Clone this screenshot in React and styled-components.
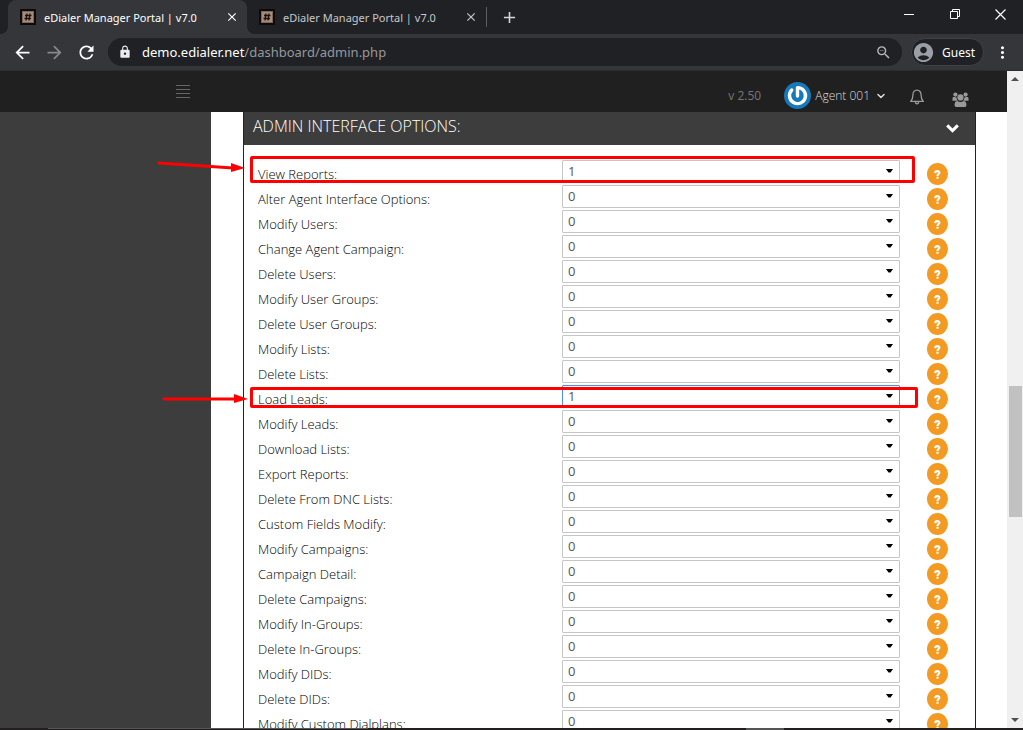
import React, { useState } from 'react'
import styled, { createGlobalStyle } from 'styled-components';
import {
  MdArrowBack,
  MdArrowForward,
  MdRefresh,
  MdLock,
  MdZoomOut,
  MdAccountCircle,
  MdMoreVert,
  MdClose,
  MdAdd,
} from 'react-icons/md';
import { FiChevronDown } from 'react-icons/fi';

const GlobalStyle = createGlobalStyle`
  * {
    box-sizing: border-box;
  }

  body {
    margin: 0;
    font-family: 'Open Sans', 'Noto Sans', sans-serif;
    font-size: 13px;
    color: #333;
  }

  button, input, select {
    font: inherit;
    color: inherit;
  }
`;

const Window = styled.div`
  display: flex;
  flex-direction: column;
  height: 100vh;
  overflow: hidden;
  background: #202124;
`;

const IconButton = styled.button`
  display: flex;
  align-items: center;
  justify-content: center;
  flex: none;
  width: ${(props) => props.$width || 32}px;
  height: ${(props) => props.$height || 32}px;
  padding: 0;
  border: 0;
  background: none;
  color: ${(props) => props.$color || '#fff'};
`;

/* tab strip */
const TabStrip = styled.div`
  display: flex;
  flex: none;
  height: 34px;
  padding-left: 8px;
`;

const Tab = styled.div`
  position: relative;
  display: flex;
  align-items: center;
  width: 239px;
  padding: 0 7px 0 12px;
  border-radius: 8px 8px 0 0;
  background: ${(props) => (props.$active ? '#35363a' : 'transparent')};
  color: ${(props) => (props.$active ? '#fff' : '#c5c8cc')};

  &::before, &::after {
    content: '';
    display: ${(props) => (props.$active ? 'block' : 'none')};
    position: absolute;
    bottom: 0;
    width: 8px;
    height: 8px;
  }
  &::before {
    left: -8px;
    background: radial-gradient(circle at 0 0, transparent 8px, #35363a 8px);
  }
  &::after {
    right: -8px;
    background: radial-gradient(circle at 100% 0, transparent 8px, #35363a 8px);
  }
`;

const TabTitle = styled.span`
  flex: 1;
  margin-left: 8px;
  font-family: 'Noto Sans', 'Open Sans', sans-serif;
  font-size: 11px;
  white-space: nowrap;
`;

const TabDivider = styled.span`
  align-self: center;
  width: 1px;
  height: 20px;
  background: #5b5d61;
`;

const WindowControls = styled.div`
  display: flex;
  margin-left: auto;
`;

/* toolbar */
const Toolbar = styled.div`
  display: flex;
  align-items: center;
  flex: none;
  height: 37px;
  padding: 0 5px 0 6px;
  border-bottom: 1px solid #2b2c2f;
  background: #35363a;
`;

const AddressBar = styled.div`
  display: flex;
  align-items: center;
  flex: 1;
  height: 28px;
  margin-left: 6px;
  padding: 0 10px;
  border-radius: 14px;
  background: #202124;
  color: #e8eaed;
  font-family: 'Noto Sans', 'Open Sans', sans-serif;
  font-size: 13px;
`;

const Host = styled.label`
  margin-left: 10px;
  color: #fff;
`;

const PathInput = styled.input`
  flex: 1;
  min-width: 0;
  padding: 0;
  border: 0;
  outline: 0;
  background: none;
  color: #95999e;
`;

const Profile = styled.button`
  display: flex;
  align-items: center;
  gap: 7px;
  height: 28px;
  margin: 0 2px 0 9px;
  padding: 0 8px 0 0;
  border: 1px solid #3f4145;
  border-radius: 14px;
  background: #202124;
  color: #fff;
  font-family: 'Noto Sans', 'Open Sans', sans-serif;
  font-size: 12px;
`;

/* page */
const Viewport = styled.div`
  display: flex;
  flex: 1;
  min-height: 0;
`;

const Page = styled.div`
  display: flex;
  flex-direction: column;
  flex: 1;
  overflow: hidden;
  background: #fff;
`;

const Header = styled.header`
  display: flex;
  align-items: center;
  flex: none;
  height: 41px;
  padding: 0 25px 0 167px;
  background: #202020;
`;

const HeaderRight = styled.div`
  display: flex;
  align-items: flex-end;
  margin-left: auto;
`;

const Version = styled.span`
  margin: 0 23px 5px 0;
  color: #777;
  font-size: 12px;
`;

const Account = styled.button`
  display: flex;
  align-items: center;
  margin: 0 8px 0 0;
  padding: 8px 0 0;
  border: 0;
  background: none;
  color: #ddd;
  font-size: 12px;
  font-weight: 300;

  span {
    margin: 0 5px 0 4px;
  }
`;

const Body = styled.div`
  display: flex;
  flex: 1;
  min-height: 0;
`;

const Sidebar = styled.aside`
  flex: none;
  width: 211px;
  background: #3d3d3d;
`;

const Main = styled.main`
  flex: 1;
  padding: 0 31px 0 32px;
`;

const Panel = styled.section`
  border: solid #222;
  border-width: 0 1px;
`;

const PanelHeader = styled.div`
  display: flex;
  align-items: center;
  justify-content: space-between;
  height: 33px;
  padding: 0 7px 0 9px;
  background: #3d3d3d;
  color: #fff;
`;

const PanelTitle = styled.h2`
  margin: 0 0 6px;
  font-size: 16px;
  font-weight: 300;
`;

const Options = styled.div`
  padding-top: 15px;
`;

const Row = styled.div`
  position: relative;
  display: grid;
  grid-template-columns: 304fr 338fr 75fr;
  grid-template-rows: 25px;
  padding-left: 14px;
`;

const Label = styled.label`
  color: #000;
  font-weight: 300;
  line-height: 28px;
`;

const SelectBox = styled.div`
  position: relative;
  height: 23px;

  svg {
    position: absolute;
    top: 9px;
    right: 7px;
    pointer-events: none;
  }
`;

const Select = styled.select`
  display: block;
  width: 100%;
  height: 23px;
  padding: 0 24px 2px 5px;
  border: 1px solid ${(props) => (props.$focused ? '#4a8ff0' : '#c6c6c6')};
  border-radius: 1px;
  outline: 0;
  appearance: none;
  background: #fff;
  color: #555;
`;

const Help = styled.button`
  display: flex;
  align-items: center;
  justify-content: center;
  width: 21px;
  height: 22px;
  margin: 3px 0 0 27px;
  padding: 0;
  border: 0;
  border-radius: 50%;
  background: #f39a23;
  color: #fff;
`;

/* red marks drawn over a row */
const Mark = styled.div`
  position: absolute;
  top: ${(props) => props.$top}px;
  left: 6px;
  right: ${(props) => props.$right}px;
  height: ${(props) => props.$height}px;
  border: 3px solid #f00;
  border-radius: 2px;
  pointer-events: none;
`;

const Arrow = styled.svg`
  position: absolute;
  top: 0;
  left: -88px;
  pointer-events: none;
`;

/* scrollbar */
const Scrollbar = styled.div`
  display: flex;
  flex-direction: column;
  flex: none;
  width: 16px;
  background: #f0f0f0;
`;

const Space = styled.div`
  flex: ${(props) => props.$grow} 0 0;
`;

const Thumb = styled.div`
  flex: 131 0 0;
  margin: 0 1px 0 2px;
  background: #c1c1c1;
`;

const BottomEdge = styled.div`
  flex: none;
  height: 2px;
  background: linear-gradient(#555, #555) 48px 0 / 320px 1px no-repeat,
    linear-gradient(#555, #555) 746px 0 / 38px 2px no-repeat, #231f20;
`;

const options = [
  'View Reports',
  'Alter Agent Interface Options',
  'Modify Users',
  'Change Agent Campaign',
  'Delete Users',
  'Modify User Groups',
  'Delete User Groups',
  'Modify Lists',
  'Delete Lists',
  'Load Leads',
  'Modify Leads',
  'Download Lists',
  'Export Reports',
  'Delete From DNC Lists',
  'Custom Fields Modify',
  'Modify Campaigns',
  'Campaign Detail',
  'Delete Campaigns',
  'Modify In-Groups',
  'Delete In-Groups',
  'Modify DIDs',
  'Delete DIDs',
  'Modify Custom Dialplans',
];

const marks = {
  'View Reports': { top: -4, right: 60, height: 27, from: [3, 3], to: [89, 8] },
  'Load Leads': { top: 2, right: 57, height: 21, from: [8, 14], to: [92, 14] },
};

function Favicon() {
  return (
    <svg width="16" height="16" viewBox="0 0 16 16">
      <rect width="16" height="16" fill="#0d0a09" />
      <rect x="2" y="2" width="12" height="12" fill="#7d675b" />
      <rect x="3" y="3" width="10" height="10" fill="#a68c7d" />
      <path d="M7 4.5L6 11.5M10 4.5L9 11.5M5 6.5H11.5M4.5 9.5H11" stroke="#1a1210" strokeWidth="1.3" />
    </svg>
  )
}

function BrowserTab({ active }) {
  return (
    <Tab $active={active}>
      <Favicon />
      <TabTitle>eDialer Manager Portal | v7.0</TabTitle>
      <IconButton $width={16} $height={16} $color="inherit" aria-label="Close tab">
        <MdClose size={14} />
      </IconButton>
    </Tab>
  )
}

function OptionRow({ name }) {
  const mark = marks[name];
  const [value, setValue] = useState(mark ? '1' : '0');
  const id = name.toLowerCase().replace(/ /g, '-');

  return (
    <Row>
      <Label htmlFor={id}>{name}:</Label>
      <SelectBox>
        <Select id={id} value={value} $focused={name === 'Load Leads'} onChange={(e) => setValue(e.target.value)}>
          <option>0</option>
          <option>1</option>
        </Select>
        <svg width="7" height="4" viewBox="0 0 7 4">
          <path d="M0 0H7L4.5 3.5H2.5Z" fill="#000" />
        </svg>
      </SelectBox>
      <Help aria-label={`Help: ${name}`}>
        <svg width="7" height="9" viewBox="0 0 8 10" fill="none" stroke="#fff" strokeWidth="2.4">
          <path d="M1.3 3.4C1.5 0.4 6.3 0.5 6.2 3C6.1 4.6 4 4.4 4 6.6M4 7.6V9.8" />
        </svg>
      </Help>
      {mark && (
        <>
          <Mark $top={mark.top} $right={mark.right} $height={mark.height} />
          <Arrow width="93" height="25" viewBox="0 0 93 25">
            <path
              d={`M${mark.from[0]} ${mark.from[1]}L${mark.to[0] - 12} ${mark.to[1]}`}
              stroke="#f00"
              strokeWidth="3"
              strokeLinecap="round"
            />
            <path
              d={`M${mark.to[0] - 14} ${mark.to[1] - 5}L${mark.to[0]} ${mark.to[1]}L${mark.to[0] - 14} ${mark.to[1] + 4}Z`}
              fill="#f00"
            />
          </Arrow>
        </>
      )}
    </Row>
  )
}

export default function App() {
  const [path, setPath] = useState('/dashboard/admin.php');

  return (
    <Window>
      <GlobalStyle />
      <TabStrip>
        <BrowserTab active />
        <BrowserTab />
        <TabDivider />
        <IconButton $width={44} $height={34} $color="#d5d7da" aria-label="New tab">
          <MdAdd size={19} />
        </IconButton>
        <WindowControls>
          <IconButton $width={46} $height={28} aria-label="Minimize">
            <svg width="10" height="10"><path d="M0 5.5H10" stroke="#fff" /></svg>
          </IconButton>
          <IconButton $width={46} $height={28} aria-label="Restore">
            <svg width="10" height="10" fill="none" stroke="#fff">
              <path d="M0.5 2.5H7.5V9.5H0.5ZM2.5 2.5V0.5H9.5V7.5H7.5" />
            </svg>
          </IconButton>
          <IconButton $width={45} $height={28} aria-label="Close">
            <svg width="11" height="11"><path d="M0.5 0.5L10.5 10.5M10.5 0.5L0.5 10.5" stroke="#fff" strokeWidth="1.2" /></svg>
          </IconButton>
        </WindowControls>
      </TabStrip>

      <Toolbar>
        <IconButton aria-label="Back"><MdArrowBack size={21} /></IconButton>
        <IconButton $color="#85878a" aria-label="Forward"><MdArrowForward size={21} /></IconButton>
        <IconButton aria-label="Reload"><MdRefresh size={21} /></IconButton>
        <AddressBar>
          <MdLock size={14} />
          <Host htmlFor="url">demo.edialer.net</Host>
          <PathInput id="url" value={path} onChange={(e) => setPath(e.target.value)} />
          <MdZoomOut size={17} color="#b5b8bc" />
        </AddressBar>
        <Profile>
          <MdAccountCircle size={23} color="#9aa0a6" />
          Guest
        </Profile>
        <IconButton aria-label="Menu"><MdMoreVert size={19} /></IconButton>
      </Toolbar>

      <Viewport>
        <Page>
          <Header>
            <IconButton aria-label="Toggle menu">
              <svg width="14" height="13" stroke="#666">
                <path d="M0 0.5H14M0 4.5H14M0 8.5H14M0 12.5H14" />
              </svg>
            </IconButton>
            <HeaderRight>
              <Version>v 2.50</Version>
              <Account>
                <svg width="27" height="27" viewBox="0 0 27 27">
                  <circle cx="13.5" cy="13.5" r="13.5" fill="#1579bb" />
                  <path
                    d="M13.5 14V5.6A8 8 0 1 1 7.8 8"
                    fill="none"
                    stroke="#fff"
                    strokeWidth="3.4"
                    strokeLinecap="round"
                    strokeLinejoin="round"
                  />
                </svg>
                <span>Agent 001</span>
                <FiChevronDown size={12} strokeWidth={3} />
              </Account>
              <IconButton $width={44} $height={24} aria-label="Notifications">
                <svg width="14" height="16" viewBox="0 0 14 16" fill="none" stroke="#999" strokeWidth="1.3">
                  <path d="M7 1.2C4.3 1.2 3 3.2 3 5.6C3 9.4 2 11 0.8 12.4H13.2C12 11 11 9.4 11 5.6C11 3.2 9.7 1.2 7 1.2ZM5.4 12.8C5.4 15.6 8.6 15.6 8.6 12.8" />
                </svg>
              </IconButton>
              <IconButton $width={43} $height={20} aria-label="Users">
                <svg width="17" height="15" viewBox="0 0 17 15" fill="#999">
                  <circle cx="3.4" cy="2.6" r="2.1" />
                  <circle cx="13.6" cy="2.6" r="2.1" />
                  <path d="M0.5 8.8V6.4C0.5 5 1.6 4.8 3.4 5.2L4.6 5.6C4.7 7 5 7.8 5.8 8.8Z" />
                  <path d="M16.5 8.8V6.4C16.5 5 15.4 4.8 13.6 5.2L12.4 5.6C12.3 7 12 7.8 11.2 8.8Z" />
                  <circle cx="8.5" cy="5.4" r="3.1" />
                  <path d="M2.6 13C2.6 10.4 3.6 9 5.4 9C7.4 10.2 9.6 10.2 11.6 9C13.4 9 14.4 10.4 14.4 13C14.4 14.4 13.6 15 12.4 15H4.6C3.4 15 2.6 14.4 2.6 13Z" />
                </svg>
              </IconButton>
            </HeaderRight>
          </Header>
          <Body>
            <Sidebar />
            <Main>
              <Panel>
                <PanelHeader>
                  <PanelTitle>ADMIN INTERFACE OPTIONS:</PanelTitle>
                  <IconButton aria-label="Collapse">
                    <svg width="13" height="9" viewBox="0 0 13 9" fill="none" stroke="#fff" strokeWidth="3">
                      <path d="M1.2 1.4L6.5 6.6L11.8 1.4" />
                    </svg>
                  </IconButton>
                </PanelHeader>
                <Options>
                  {options.map((name) => (
                    <OptionRow key={name} name={name} />
                  ))}
                </Options>
              </Panel>
            </Main>
          </Body>
        </Page>
        <Scrollbar>
          <IconButton $width={16} $height={16} aria-label="Scroll up">
            <svg width="8" height="4"><path d="M0 4L4 0L8 4Z" fill="#505050" /></svg>
          </IconButton>
          <Space $grow={299} />
          <Thumb />
          <Space $grow={195} />
          <IconButton $width={16} $height={16} aria-label="Scroll down">
            <svg width="8" height="4"><path d="M0 0L4 4L8 0Z" fill="#505050" /></svg>
          </IconButton>
        </Scrollbar>
      </Viewport>
      <BottomEdge />
    </Window>
  )
}
